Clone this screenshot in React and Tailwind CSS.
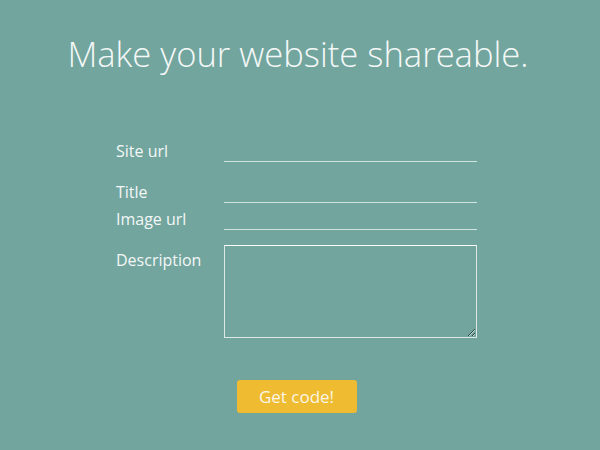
import React from 'react';

const font = { fontFamily: '"Open Sans", "Liberation Sans", sans-serif' };

const Field = ({ label, className = '' }) => (
  <div className={`flex ${className}`}>
    <label className="w-[108px] shrink-0 pt-px text-[16px] leading-[20px] text-[#f3f7f6]">{label}</label>
    <input
      type="text"
      className="w-[253px] h-[22px] bg-transparent border-0 border-b border-[#d2e3e0] outline-none text-white text-[14px]"
    />
  </div>
);

export default function App() {
  return (
    <div className="w-[600px] h-[450px] bg-[#72a59e] overflow-hidden" style={font}>
      <h1 className="pt-[31px] pr-[4px] text-center text-[34.6px] leading-[46px] font-light text-[#f4f8f7]">
        Make your website shareable.
      </h1>

      <form className="ml-[116px] w-[361px] mt-[63px] flex flex-col" onSubmit={(e) => e.preventDefault()}>
        <Field label="Site url" />
        <Field label="Title" className="mt-[19px]" />
        <Field label="Image url" className="mt-[5px]" />
        <div className="flex mt-[15px]">
          <label className="w-[108px] shrink-0 mt-[5px] text-[16px] leading-[20px] text-[#f3f7f6]">Description</label>
          <textarea className="w-[253px] h-[93px] bg-transparent border border-[#dce9e7] border-t-white outline-none text-white text-[14px]" />
        </div>
        <div className="flex justify-center mt-[42px]">
          <button
            type="submit"
            className="w-[120px] h-[33px] rounded-[3px] bg-[#eebb31] text-[#fbf6e6] text-[17px]"
          >
            Get code!
          </button>
        </div>
      </form>
    </div>
  );
}
